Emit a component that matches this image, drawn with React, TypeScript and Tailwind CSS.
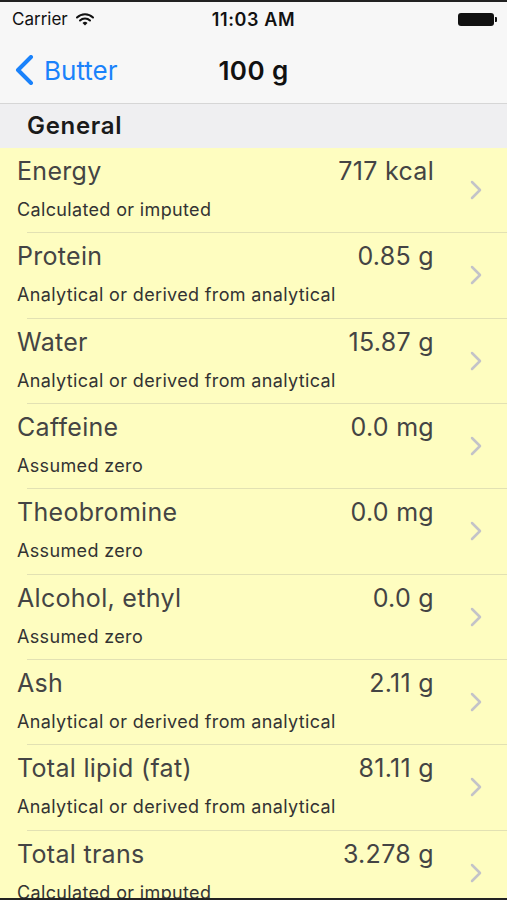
import React from "react";

const rows = [
  ["Energy", "717 kcal", "Calculated or imputed"],
  ["Protein", "0.85 g", "Analytical or derived from analytical"],
  ["Water", "15.87 g", "Analytical or derived from analytical"],
  ["Caffeine", "0.0 mg", "Assumed zero"],
  ["Theobromine", "0.0 mg", "Assumed zero"],
  ["Alcohol, ethyl", "0.0 g", "Assumed zero"],
  ["Ash", "2.11 g", "Analytical or derived from analytical"],
  ["Total lipid (fat)", "81.11 g", "Analytical or derived from analytical"],
  ["Total trans", "3.278 g", "Calculated or imputed"],
];

export default function App() {
  return (
    <div
      className="relative w-[507px] h-[900px] overflow-hidden bg-[#fefdc0]"
      style={{ fontFamily: "Inter, 'Liberation Sans', Arial, sans-serif" }}
    >
      <div className="bg-[#f7f7f7] border-t-2 border-[#222] border-b border-b-[#d6d6d6]">
        <div className="h-[35px] flex items-center justify-between px-[12px] relative">
          <div className="flex items-center gap-[8px] text-[17px] text-[#111]">
            <span>Carrier</span>
            <svg width="18" height="13" viewBox="0 0 18 13">
              <path d="M1 4.5 A11.5 11.5 0 0 1 17 4.5" stroke="#111" strokeWidth="2" fill="none" strokeLinecap="round" />
              <path d="M4 7.5 A7 7 0 0 1 14 7.5" stroke="#111" strokeWidth="2" fill="none" strokeLinecap="round" />
              <path d="M6.5 10 L9 12.5 L11.5 10 A3.5 3.5 0 0 0 6.5 10 Z" fill="#111" />
            </svg>
          </div>
          <div className="absolute left-0 right-0 text-center text-[18px] font-semibold text-[#111] tracking-[0.6px] pointer-events-none">11:03 AM</div>
          <div className="flex items-center mr-[-2px]">
            <div className="w-[36px] h-[13px] bg-[#111] rounded-[3px]" />
            <div className="w-[2px] h-[5px] bg-[#111] rounded-r-[1px] ml-[1px]" />
          </div>
        </div>
        <div className="h-[66px] relative flex items-center">
          <div className="flex items-center pl-[14px] text-[#1a82fb]">
            <svg width="20" height="30" viewBox="0 0 20 30">
              <path d="M17 2 L4 15 L17 28" stroke="#1a82fb" strokeWidth="4" fill="none" strokeLinecap="round" strokeLinejoin="round" />
            </svg>
            <span className="text-[26px] ml-[10px]">Butter</span>
          </div>
          <div className="absolute left-0 right-0 text-center text-[26px] font-semibold text-[#111] tracking-[0.4px] pointer-events-none">100 g</div>
        </div>
      </div>
      <div className="h-[44px] bg-[#efeff1] flex items-center pl-[27px] text-[24px] font-semibold text-[#1a1a1a] tracking-[0.7px]">
        General
      </div>
      <div>
        {rows.map(([name, value, sub], i) => (
          <div key={i} className="h-[85.33px] relative flex">
            <div className="flex-1 pl-[17px] pr-[73px] flex flex-col">
              <div className="flex justify-between items-baseline mt-[8px] text-[25px] text-[#444] leading-[30px] tracking-[0.3px]">
                <span>{name}</span>
                <span>{value}</span>
              </div>
              <div className="text-[18px] text-[#333] mt-[13px] leading-[22px] tracking-[0.35px] whitespace-nowrap">{sub}</div>
            </div>
            <svg className="absolute right-[25px] top-[32px]" width="12" height="20" viewBox="0 0 12 20">
              <path d="M2 2 L10 10 L2 18" stroke="#c3c3c8" strokeWidth="2.5" fill="none" strokeLinecap="round" strokeLinejoin="round" />
            </svg>
            <div className="absolute left-[27px] right-0 bottom-0 h-[1px] bg-[#e2e1b3]" />
          </div>
        ))}
      </div>
      <div className="absolute left-0 right-0 bottom-0 h-[2px] bg-[#222]" />
    </div>
  );
}
